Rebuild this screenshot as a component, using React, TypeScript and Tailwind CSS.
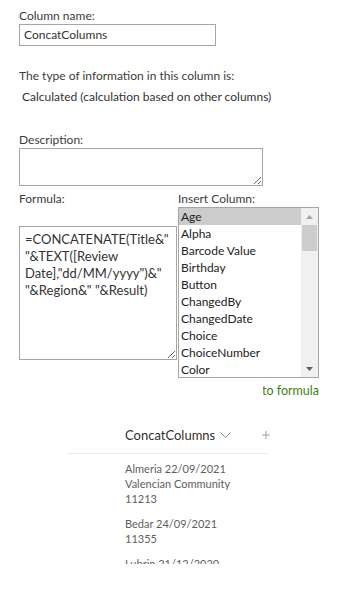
import React from "react";

const items = [
  "Age",
  "Alpha",
  "Barcode Value",
  "Birthday",
  "Button",
  "ChangedBy",
  "ChangedDate",
  "Choice",
  "ChoiceNumber",
  "Color",
];

export default function App() {
  return (
    <div className="w-[351px] h-[600px] overflow-hidden bg-white pl-[19px] pt-[8px] text-[#3c3c3c] font-['Lato',sans-serif] text-[12px] leading-[16px]">
      <div>Column name:</div>
      <div className="w-[197px] h-[22px] border border-[#a6a6a6] pl-[4px] flex items-center text-[#333]">
        ConcatColumns
      </div>
      <div className="mt-[22px]">The type of information in this column is:</div>
      <div className="mt-[5px] pl-[3px] text-[#333]">Calculated (calculation based on other columns)</div>
      <div className="mt-[27px]">Description:</div>
      <textarea
        readOnly
        className="block w-[244px] h-[38px] border border-[#a6a6a6] resize outline-none"
      />
      <div className="flex mt-[5px]">
        <div className="w-[159px] shrink-0">
          <div>Formula:</div>
          <textarea
            readOnly
            className="block mt-[19px] w-[158px] h-[134px] border border-[#a6a6a6] resize outline-none px-[5px] pt-[4px] text-[13px] leading-[17px] text-[#333] font-['Lato',sans-serif]"
            defaultValue={'=CONCATENATE(Title&" "&TEXT([Review Date],"dd/MM/yyyy")&" "&Region&" "&Result)'}
          />
        </div>
        <div>
          <div>Insert Column:</div>
          <div className="w-[141px] h-[171px] border border-[#a6a6a6] flex bg-white">
            <div className="flex-1 text-[12px] leading-[17px] text-[#222]">
              {items.map((it, i) => (
                <div key={it} className={"pl-[2px] h-[17px] " + (i === 0 ? "bg-[#cccccc]" : "")}>
                  {it}
                </div>
              ))}
            </div>
            <div className="w-[17px] bg-[#f0f0f0] flex flex-col items-center">
              <div className="h-[17px] flex items-center justify-center">
                <svg width="7" height="4" viewBox="0 0 7 4"><path d="M0 4 L3.5 0 L7 4 Z" fill="#a3a3a3" /></svg>
              </div>
              <div className="w-[15px] h-[26px] bg-[#cdcdcd]" />
              <div className="flex-1" />
              <div className="h-[17px] flex items-center justify-center">
                <svg width="7" height="4" viewBox="0 0 7 4"><path d="M0 0 L3.5 4 L7 0 Z" fill="#606060" /></svg>
              </div>
            </div>
          </div>
          <div className="flex justify-end mt-[5px] w-[142px]">
            <div className="w-[57px] overflow-hidden flex justify-end">
              <span className="text-[#3f7f12] whitespace-nowrap text-[12.5px] pr-[1px]">Add to formula</span>
            </div>
          </div>
        </div>
      </div>

      <div className="ml-[48px] w-[200px] mt-[25px]">
        <div className="flex items-center h-[30px] pl-[58px] border-b border-[#edebe9] pb-[7px]">
          <span className="text-[13px] text-[#323130] whitespace-nowrap">ConcatColumns</span>
          <svg className="ml-[5px] shrink-0" width="11" height="7" viewBox="0 0 11 7">
            <path d="M0.5 0.5 L5.5 5.5 L10.5 0.5" fill="none" stroke="#8a8886" strokeWidth="1" />
          </svg>
          <svg className="ml-[31px] shrink-0" width="8" height="8" viewBox="0 0 8 8">
            <path d="M4 0 V8 M0 4 H8" stroke="#a19f9d" strokeWidth="1" />
          </svg>
        </div>
        <div className="pl-[58px] pt-[7px] text-[11px] leading-[15px] text-[#605e5c]">
          <div>Almeria 22/09/2021</div>
          <div>Valencian Community</div>
          <div>11213</div>
          <div className="mt-[10px]">Bedar 24/09/2021</div>
          <div>11355</div>
          <div className="mt-[10px] h-[8px] overflow-hidden">Lubrin 21/12/2020</div>
        </div>
      </div>
    </div>
  );
}
